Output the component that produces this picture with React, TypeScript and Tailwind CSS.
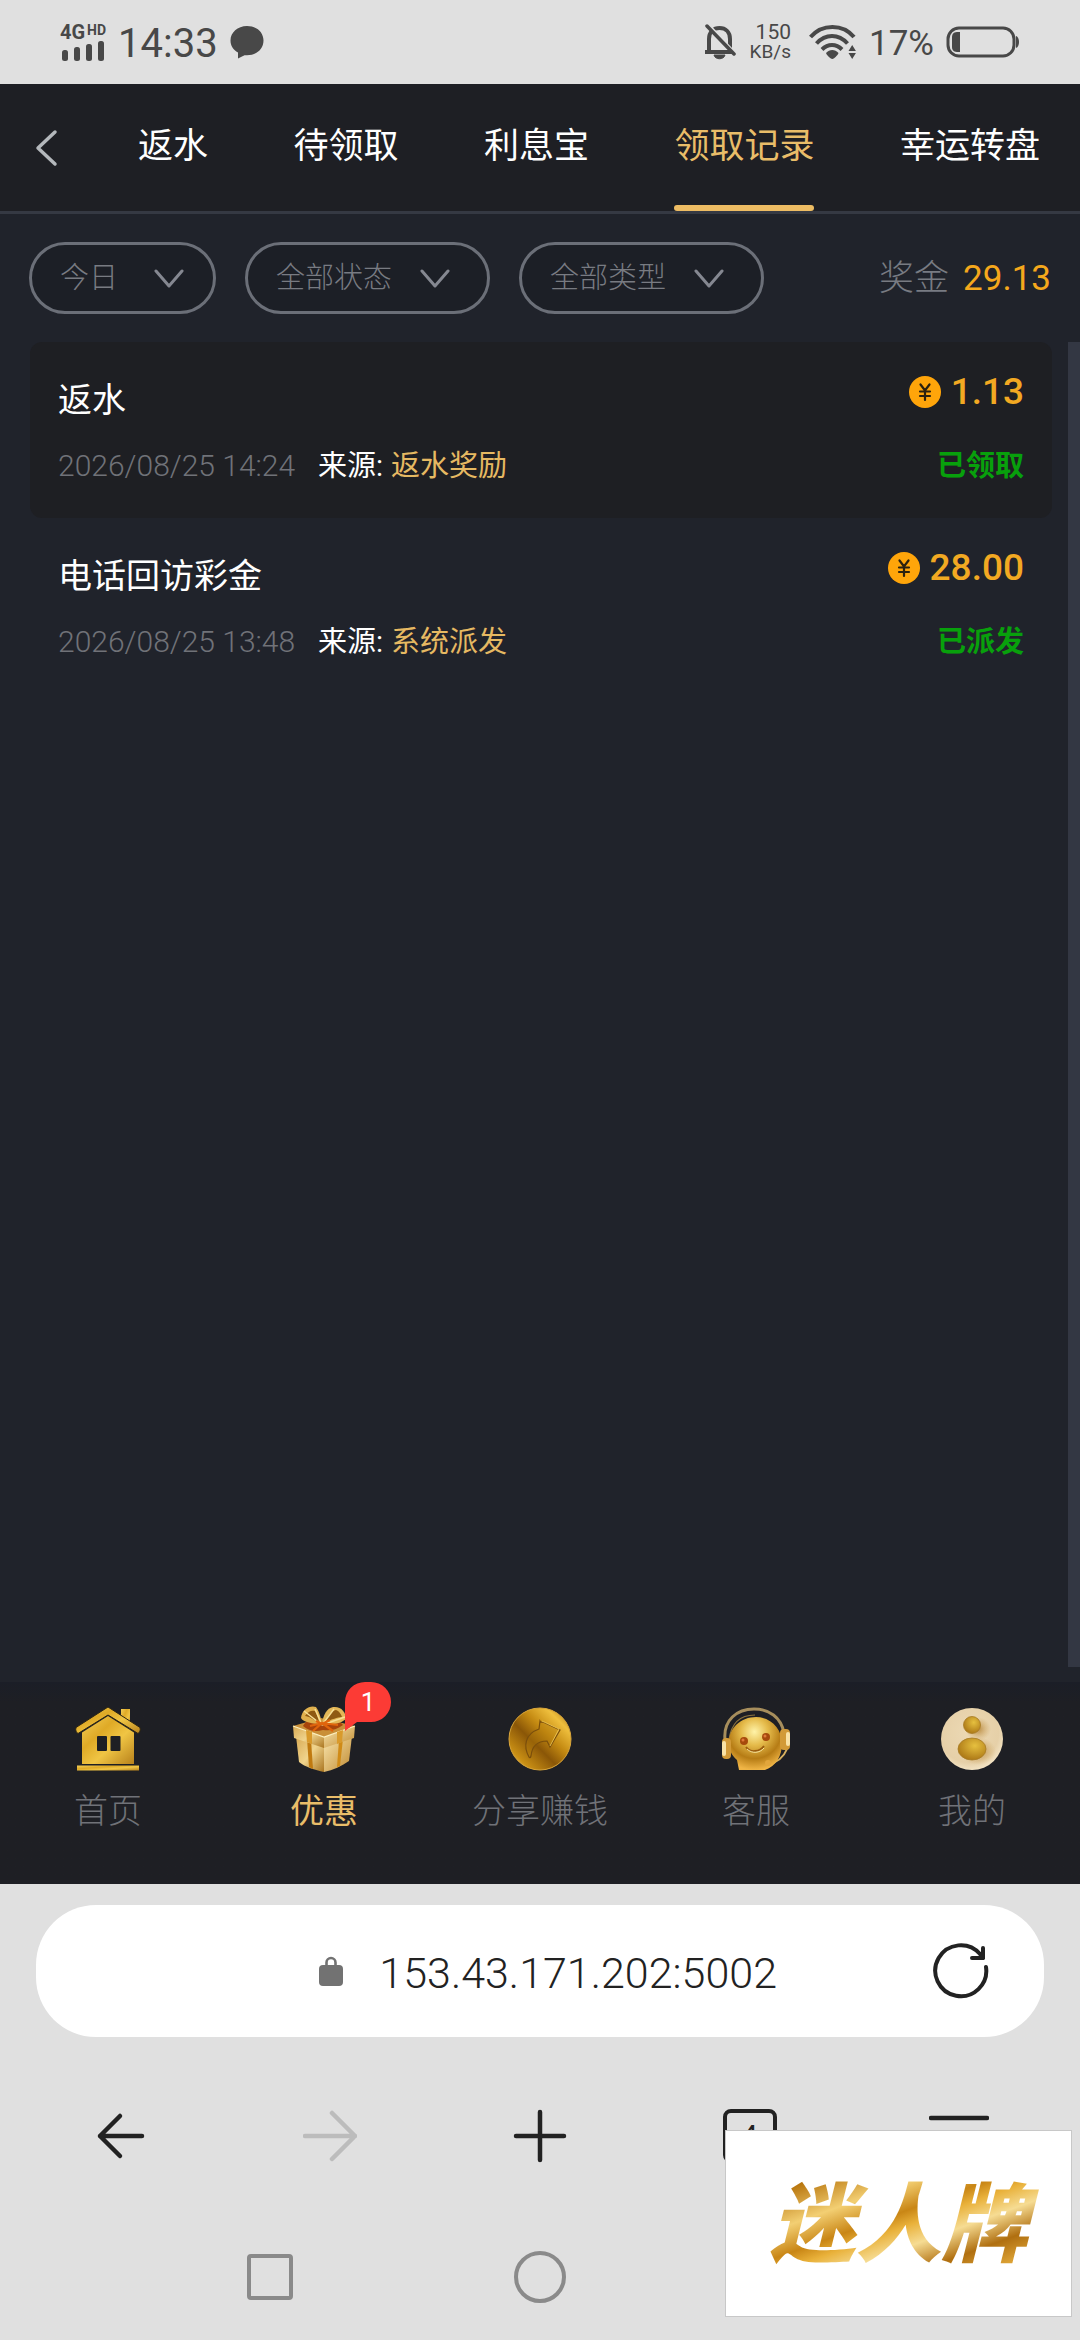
import { useState } from "react";
import clsx from "clsx";

interface RewardLog {
  id: number;
  title: string;
  time: string;
  source: string;
  amount: string;
  status: string;
}

const TABS = ["返水", "待领取", "利息宝", "领取记录", "幸运转盘"];

const FILTERS = [
  { label: "日期", options: ["今日", "昨日", "近7日"], width: "w-[187px]", arrow: "right-8" },
  { label: "状态", options: ["全部状态", "已领取", "已派发"], width: "w-[245px]", arrow: "right-10" },
  { label: "类型", options: ["全部类型", "返水", "彩金"], width: "w-[245px]", arrow: "right-10" },
];

const LOGS: RewardLog[] = [
  { id: 1, title: "返水", time: "2026/08/25 14:24", source: "返水奖励", amount: "1.13", status: "已领取" },
  { id: 2, title: "电话回访彩金", time: "2026/08/25 13:48", source: "系统派发", amount: "28.00", status: "已派发" },
];

function StatusBar() {
  return (
    <div className="flex h-[84px] items-center justify-between bg-[#e0e0e0] px-[60px] text-[#484848]">
      <div className="flex items-center">
        <div className="flex w-12 flex-col gap-px font-bold">
          <div className="flex items-start gap-0.5">
            <span className="text-xl leading-4">4G</span>
            <span className="text-sm leading-3">HD</span>
          </div>
          <svg viewBox="0 0 46 20" className="h-5 w-[46px]" fill="currentColor">
            <rect x="2" y="9" width="6" height="11" rx="2.5" />
            <rect x="14" y="6" width="6" height="14" rx="2.5" />
            <rect x="26" y="3" width="6" height="17" rx="2.5" />
            <rect x="38" y="0" width="6" height="20" rx="2.5" />
          </svg>
        </div>
        <span className="ml-2.5 pt-1 text-[40px] leading-[80px]">14:33</span>
        <svg viewBox="0 0 34 34" className="ml-3 h-[34px] w-[34px]" fill="currentColor">
          <path d="M17 1C7.500 1 .5 7.500.5 15.500c0 5.200 2.800 9.400 7.500 12v6l6.500-3.300c.8.1 1.600.1 2.500.1 9.500 0 16.500-6.300 16.500-14.800S26.500 1 17 1z" />
        </svg>
      </div>

      <div className="flex items-center">
        <svg viewBox="0 0 32 36" className="h-9 w-8" fill="none" stroke="currentColor" strokeWidth="4">
          <path d="M5 28V15C5 8 9.500 4 15.500 4S26 8 26 15v13" />
          <path d="M1 28h29" />
          <path d="M10 31h11c-1 5-10 5-11 0z" fill="currentColor" strokeWidth="1" />
          <path d="M6 2.500l25 27" stroke="#e0e0e0" strokeWidth="3" />
          <path d="M3 2l27 28" strokeLinecap="round" strokeWidth="3.500" />
        </svg>
        <div className="ml-3.5 flex flex-col items-end text-[21px] leading-[19px]">
          <span>150</span>
          <span className="text-[19px] leading-[19px]">KB/s</span>
        </div>
        <svg viewBox="0 0 48 36" className="ml-[18px] h-9 w-12" fill="none" stroke="currentColor" strokeWidth="4">
          <path d="M1.500 13C13-.5 34-.5 45 13" />
          <path d="M7.500 19.500c9-10 22-10 31 0" />
          <path d="M13 25.500c6-6 14-6 20 0" />
          <path d="M17 29c3.500-4 9-4 12.500 0-1 2.500-4 5.500-6.200 6C21 34.500 18 31.500 17 29z" fill="currentColor" stroke="none" />
          <path d="M39.500 27l3.700-6 3.700 6zM39.500 29l3.700 6 3.700-6z" fill="currentColor" stroke="none" />
        </svg>
        <span className="ml-3 pt-1 text-[35px] leading-[80px]">17%</span>
        <svg viewBox="0 0 74 32" className="ml-3 h-8 w-[74px]" fill="none" stroke="currentColor" strokeWidth="3">
          <rect x="2" y="2" width="66" height="28" rx="11" />
          <path d="M14 6v20h-3c-4 0-5-3-5-5V11c0-2 1-5 5-5z" fill="currentColor" stroke="none" />
          <path d="M70 10c4 1 4 11 0 12z" fill="currentColor" stroke="none" />
        </svg>
      </div>
    </div>
  );
}

function GoldDefs() {
  return (
    <svg className="absolute h-0 w-0" aria-hidden="true">
      <defs>
        <linearGradient id="gold" x1="0" y1="0" x2="1" y2="1">
          <stop offset="0" stopColor="#f3cf5a" />
          <stop offset=".35" stopColor="#dfaa26" />
          <stop offset=".6" stopColor="#f0c544" />
          <stop offset="1" stopColor="#b8821c" />
        </linearGradient>
        <linearGradient id="coin" x1="0" y1="1" x2="1" y2="0">
          <stop offset="0" stopColor="#fbe08a" />
          <stop offset=".18" stopColor="#c98f14" />
          <stop offset=".42" stopColor="#8a5607" />
          <stop offset=".6" stopColor="#c48a12" />
          <stop offset=".8" stopColor="#efbf3d" />
          <stop offset="1" stopColor="#9a640b" />
        </linearGradient>
        <linearGradient id="boxLeft" x1="0" y1="0" x2="1" y2="1">
          <stop offset="0" stopColor="#d8a952" />
          <stop offset=".5" stopColor="#f0d48d" />
          <stop offset="1" stopColor="#a9741f" />
        </linearGradient>
        <linearGradient id="boxRight" x1="0" y1="0" x2="1" y2="1">
          <stop offset="0" stopColor="#f9e6ae" />
          <stop offset="1" stopColor="#c08a31" />
        </linearGradient>
        <radialGradient id="ball" cx=".48" cy=".28" r=".72">
          <stop offset="0" stopColor="#fff3a8" />
          <stop offset=".35" stopColor="#e5bb4b" />
          <stop offset=".7" stopColor="#b67c15" />
          <stop offset="1" stopColor="#f0b546" />
        </radialGradient>
        <radialGradient id="bead" cx=".6" cy=".35" r=".7">
          <stop offset="0" stopColor="#e6c03f" />
          <stop offset="1" stopColor="#a97414" />
        </radialGradient>
        <radialGradient id="cream" cx=".45" cy=".4" r=".6">
          <stop offset="0" stopColor="#ecd9b4" />
          <stop offset=".8" stopColor="#e6d0a8" />
          <stop offset="1" stopColor="#f2e2c2" />
        </radialGradient>
        <radialGradient id="shade">
          <stop offset="0" stopColor="#a8721c" stopOpacity=".75" />
          <stop offset="1" stopColor="#c89a4c" stopOpacity="0" />
        </radialGradient>
      </defs>
    </svg>
  );
}

function HomeIcon() {
  return (
    <svg viewBox="0 0 66 66" className="h-[66px] w-[66px]">
      <path d="M46 3h9v20l-9-7z" fill="url(#gold)" />
      <path d="M33 10L7 26.500V58h52V26.500z" fill="url(#gold)" />
      <path d="M33 1L1 21.500c-.8 2.800.2 5 2 6L33 9l30 18.500c1.800-1 2.800-3.200 2-6z" fill="url(#gold)" stroke="#2b2413" strokeWidth="1" />
      <rect x="22" y="30" width="10" height="15" rx="1" fill="#1e1f24" />
      <rect x="35.500" y="30" width="10" height="15" rx="1" fill="#1e1f24" />
      <rect x="2" y="59.500" width="62" height="5" fill="url(#gold)" />
    </svg>
  );
}

function GiftIcon() {
  return (
    <svg viewBox="0 0 66 66" className="h-[66px] w-[66px]">
      <path d="M5 30l28 9v27c-9-2-19-5-25-10z" fill="url(#boxLeft)" />
      <path d="M33 39l28-9-3 25c-7 5-16 9-25 11z" fill="url(#boxRight)" />
      <path d="M16 33l4 1 2 29-4-2z" fill="#c07a10" />
      <path d="M48 34l4-1-3 27-3 1z" fill="#d08b17" />
      <path d="M2 20l28-8 34 8-31 11z" fill="#c98f38" />
      <path d="M2 20l31 11v11L3 32z" fill="url(#boxLeft)" />
      <path d="M33 31l31-11-1 12-30 10z" fill="url(#boxRight)" />
      <path d="M2 20l31 11 31-11" fill="none" stroke="#fff0bd" strokeWidth="1.200" />
      <path d="M15 24l6 2v12l-5-2zM46 26l6-2-1 12-5 2z" fill="#d99a2b" />
      <path d="M12 20c5-8 12-8 19-4 8-5 17-3 21 3-7 5-13 6-20 5-8 2-14 1-20-4z" fill="#a8440b" />
      <path d="M31 18C22 18 12 16 10 12 11 3 19-1 25 1c3 4 5 11 6 17z" fill="#dfb04d" />
      <path d="M31 18c1-9 5-16 11-17 8-1 13 5 13 12-6 5-15 6-24 5z" fill="#e3b757" />
      <path d="M28 16C22 14 18 10 14 10c3-5 7-6 10-5 2 3 3 7 4 11zM35 15c2-6 5-10 10-11 3 1 5 4 6 7-5 0-10 3-16 4z" fill="#8f5a12" />
      <path d="M31 19L13 5M31 19L24 3M31 19l12-16M31 19l23-8" stroke="#f7df95" strokeWidth="1.500" />
      <path d="M19 20l12-3 16 2M22 25l9-8 11 8M25 15l6 3 8-4" fill="none" stroke="#e0640c" strokeWidth="2.200" />
    </svg>
  );
}

function ShareIcon() {
  return (
    <svg viewBox="0 0 66 66" className="h-[66px] w-[66px]">
      <circle cx="33" cy="33" r="31" fill="url(#coin)" stroke="#d9a53a" strokeWidth="1" />
      <path
        d="M22 51c-6-11-4-23 10-28l1-8c1 2 2 1 3 1l17 8-10 17-3-6c-9 0-15 5-16 15-.5 2-1.500 2-2 1z"
        fill="#b37c0c"
        fillOpacity=".35"
        stroke="#7a4e0c"
        strokeWidth="1.200"
      />
      <path d="M35 15l17 8-9 17" fill="none" stroke="#f2cd59" strokeWidth=".8" />
    </svg>
  );
}

function ServiceIcon() {
  return (
    <svg viewBox="0 0 72 66" className="h-[66px] w-[72px]">
      <path d="M5 34C3 14 17 3 34 3c15 0 27 8 30 24" fill="none" stroke="#a78e5c" strokeWidth="3" />
      <path d="M9 34C11 18 20 9 35 9" fill="none" stroke="#8c7340" strokeWidth="1.200" />
      <path d="M67 43c-4 10-11 14-20 16" fill="none" stroke="#d8b160" strokeWidth="2" />
      <path d="M36 11c15 0 26 12 26 26 0 13-6 23-17 27H19l-2-10c-6-5-8-11-8-18 0-14 12-25 27-25z" fill="url(#ball)" />
      <rect x="2" y="32" width="9" height="21" rx="4" fill="#d29a38" />
      <rect x="2" y="35" width="4" height="15" rx="2" fill="#f9e2a6" />
      <rect x="60" y="23" width="10" height="21" rx="4" fill="#d29a38" />
      <rect x="66" y="26" width="4" height="14" rx="2" fill="#f9e2a6" />
      <circle cx="24" cy="35" r="4" fill="#a64a0c" />
      <circle cx="46" cy="31" r="4" fill="#a64a0c" />
      <circle cx="23" cy="34" r="1.500" fill="#e0793a" />
      <circle cx="45" cy="30" r="1.500" fill="#e0793a" />
      <path d="M26 41c4 6 14 5 18-1" fill="none" stroke="#9a5c0e" strokeWidth="1.800" />
      <path d="M27 43c5 5 13 4 17-1" fill="none" stroke="#fff0ae" strokeWidth=".9" />
      <circle cx="48" cy="57" r="3" fill="#e2a63c" />
    </svg>
  );
}

function MineIcon() {
  return (
    <svg viewBox="0 0 66 66" className="h-[66px] w-[66px]">
      <circle cx="33" cy="33" r="31" fill="url(#cream)" />
      <ellipse cx="39" cy="23" rx="13" ry="12" fill="url(#shade)" />
      <ellipse cx="39" cy="45" rx="18" ry="14" fill="url(#shade)" />
      <circle cx="33" cy="19" r="8.500" fill="url(#bead)" stroke="#a77b25" strokeWidth=".8" />
      <ellipse cx="33" cy="43" rx="14" ry="11" fill="url(#bead)" stroke="#a77b25" strokeWidth=".8" />
    </svg>
  );
}

const NAV = [
  { label: "首页", icon: <HomeIcon /> },
  { label: "优惠", icon: <GiftIcon />, badge: 1 },
  { label: "分享赚钱", icon: <ShareIcon /> },
  { label: "客服", icon: <ServiceIcon /> },
  { label: "我的", icon: <MineIcon /> },
];

function Coin() {
  return (
    <svg viewBox="0 0 32 32" className="h-8 w-8">
      <circle cx="16" cy="16" r="16" fill="#ffa50a" />
      <path d="M11.500 8.500L16 14.500l4.500-6M16 14.500V24M11 15.500h10M11 20h10" fill="none" stroke="#2b210f" strokeWidth="2.200" strokeLinecap="round" />
    </svg>
  );
}

function BrowserBar() {
  const tool = "flex flex-1 justify-center";
  return (
    <div className="bg-[#e0e0e0] text-[#222]">
      <div className="px-9 pt-[21px]">
        <div className="flex h-[132px] items-center rounded-[60px] bg-white pr-[55px]">
          <div className="flex-[2]" />
          <svg viewBox="0 0 24 30" className="h-[30px] w-6" fill="#727272">
            <rect x="0" y="9" width="24" height="21" rx="4" />
            <path d="M7.500 10V6.500a4.500 4.500 0 019 0V10" fill="none" stroke="#727272" strokeWidth="2.600" />
          </svg>
          <input
            aria-label="地址"
            defaultValue="153.43.171.202:5002"
            className="ml-9 w-[412px] bg-transparent pt-1 text-[43px] leading-[60px] font-light outline-none"
          />
          <div className="flex-1" />
          <button aria-label="刷新">
            <svg viewBox="0 0 56 56" className="h-14 w-14" fill="none" stroke="currentColor" strokeWidth="4" strokeLinecap="round" strokeLinejoin="round">
              <path d="M53 24A25.500 25.500 0 1147 11l3 4" />
              <path d="M50 5v10H39" />
            </svg>
          </button>
        </div>
      </div>

      <div className="flex h-[177px] items-center px-4 pt-5">
        <button aria-label="后退" className={tool}>
          <svg viewBox="0 0 54 54" className="h-[54px] w-[54px]" fill="none" stroke="currentColor" strokeWidth="4.500" strokeLinecap="round" strokeLinejoin="round">
            <path d="M48 27H6M26 7L6 27l20 20" />
          </svg>
        </button>
        <button aria-label="前进" disabled className={clsx(tool, "text-[#bcbcbc]")}>
          <svg viewBox="0 0 54 54" className="h-[54px] w-[54px]" fill="none" stroke="currentColor" strokeWidth="4.500" strokeLinecap="round" strokeLinejoin="round">
            <path d="M2 27h50M29 4l23 23-23 23" />
          </svg>
        </button>
        <button aria-label="新建标签页" className={tool}>
          <svg viewBox="0 0 54 54" className="h-[54px] w-[54px]" fill="none" stroke="currentColor" strokeWidth="4.500" strokeLinecap="round">
            <path d="M27 3v48M3 27h48" />
          </svg>
        </button>
        <button aria-label="标签页" className={tool}>
          <span className="flex h-[54px] w-[54px] items-center justify-center rounded-lg border-4 border-[#222] text-[28px] leading-none">4</span>
        </button>
        <button aria-label="菜单" className={tool}>
          <svg viewBox="0 0 60 42" className="h-[42px] w-[60px]" stroke="currentColor" strokeWidth="4.500" strokeLinecap="round">
            <path d="M2 3h56M2 21h56M2 39h56" />
          </svg>
        </button>
      </div>

      <div className="flex h-[126px] items-center justify-around px-[135px] text-[#8a8a8a]">
        <button aria-label="最近任务" className={tool}>
          <span className="h-[46px] w-[46px] rounded border-4 border-current" />
        </button>
        <button aria-label="主屏幕" className={tool}>
          <span className="h-[52px] w-[52px] rounded-full border-4 border-current" />
        </button>
        <button aria-label="返回" className={tool}>
          <svg viewBox="0 0 54 54" className="h-[54px] w-[54px]" fill="none" stroke="currentColor" strokeWidth="4" strokeLinejoin="round">
            <path d="M42 6v42L10 27z" />
          </svg>
        </button>
      </div>
    </div>
  );
}

export default function App() {
  const [tab, setTab] = useState("领取记录");

  return (
    <div className="relative flex min-h-screen flex-col bg-[#20232b] font-['Roboto','Noto_Sans_CJK_SC',sans-serif]">
      <GoldDefs />
      <StatusBar />

      <header className="flex h-[130px] items-stretch border-b-[3px] border-[#353943] bg-[#1e1f24] pr-10 pl-8">
        <button aria-label="返回" className="flex items-center text-[#b4b8bc]">
          <svg viewBox="0 0 28 40" className="h-10 w-7" fill="none" stroke="currentColor" strokeWidth="3.500" strokeLinecap="round" strokeLinejoin="round">
            <path d="M23 4L6 20l17 16" />
          </svg>
        </button>
        <div className="flex flex-1 justify-between pl-[78px]">
          {TABS.map((t) => (
            <button key={t} onClick={() => setTab(t)} className={clsx("flex flex-col", t === tab ? "text-[#e9bd69]" : "text-white")}>
              <span className="flex flex-1 items-center pt-1 text-[35px] leading-none">{t}</span>
              <span className={clsx("h-1.5 w-full rounded-full", t === tab && "bg-[#edbc63]")} />
            </button>
          ))}
        </div>
      </header>

      <div className="flex items-center gap-[29px] px-[29px] py-7">
        {FILTERS.map((f) => (
          <div key={f.label} className={clsx("relative", f.width)}>
            <select
              aria-label={f.label}
              className="h-[72px] w-full appearance-none rounded-full border-[3px] border-[#6b6f78] bg-[#1c1f26] pt-0.5 pl-7 text-[29px] font-light text-[#787b82] outline-none"
            >
              {f.options.map((o) => (
                <option key={o}>{o}</option>
              ))}
            </select>
            <svg
              viewBox="0 0 30 20"
              className={clsx("pointer-events-none absolute top-[27px] h-5 w-[30px]", f.arrow)}
              fill="none"
              stroke="#858891"
              strokeWidth="3"
              strokeLinecap="round"
              strokeLinejoin="round"
            >
              <path d="M2 2l13 15L28 2" />
            </svg>
          </div>
        ))}
        <div className="ml-auto flex items-center gap-3.5 text-[35px] leading-none">
          <span className="font-light text-[#787b82]">奖金</span>
          <span className="text-[#f5a81c]">29.13</span>
        </div>
      </div>

      <main className="flex flex-1 pb-[15px]">
        <ul className="flex-1 pl-[30px]">
          {LOGS.map((log, i) => (
            <li key={log.id} className={clsx("flex h-44 justify-between rounded-xl px-7 pt-8", i % 2 === 0 && "bg-[#1e1f23]")}>
              <div className="flex flex-col gap-6 pt-1">
                <h2 className="text-[34px] leading-[44px] text-white">{log.title}</h2>
                <p className="flex text-[29px] leading-[40px]">
                  <time className="w-[260px] text-[30px] font-light text-[#707278]">{log.time}</time>
                  <span className="text-white">来源:</span>
                  <span className="ml-2 text-[#e6b962]">{log.source}</span>
                </p>
              </div>
              <div className="flex flex-col items-end gap-9">
                <div className="flex items-center gap-2.5 text-[37px] leading-9 font-medium text-[#f2a922]">
                  <Coin />
                  {log.amount}
                </div>
                <span className="text-[29px] leading-[40px] font-bold text-[#08a00c]">{log.status}</span>
              </div>
            </li>
          ))}
        </ul>
        <div className="ml-4 w-3 bg-[#333743]" />
      </main>

      <nav className="flex h-[202px] bg-linear-to-b from-[#1b1e27] to-[#1e1f24] to-10% pt-6">
        {NAV.map((n) => (
          <a key={n.label} href="#" className={clsx("flex flex-1 flex-col items-center gap-4", n.badge ? "text-[#e9bd69]" : "text-[#707278]")}>
            <span className="relative">
              {n.icon}
              {n.badge && (
                <span className="absolute -top-6 left-[54px] flex h-10 w-[46px] items-center justify-center text-[26px] text-white">
                  <svg viewBox="0 0 46 50" className="absolute top-0 left-0 h-[50px] w-[46px]">
                    <path d="M20 0h6a20 20 0 010 40H12L0 49V20A20 20 0 0120 0z" fill="#fc3b35" />
                  </svg>
                  <span className="relative">{n.badge}</span>
                </span>
              )}
            </span>
            <span className={clsx("text-[34px] leading-[46px]", !n.badge && "font-light")}>{n.label}</span>
          </a>
        ))}
      </nav>

      <BrowserBar />

      {/* floating brand mark, sits over the browser chrome */}
      <div className="absolute right-2 bottom-[23px] flex h-[187px] w-[347px] items-center justify-center border border-[#c8c8c8] bg-white">
        <span className="bg-[linear-gradient(160deg,#b9770f_15%,#f3cf73_32%,#c98615_45%,#e9b13a_52%,#f6dc93_62%,#b06f10_75%,#e2a93a_88%)] bg-clip-text px-3 pt-1 text-[86px] leading-[110px] font-black text-transparent italic">
          迷人牌
        </span>
      </div>
    </div>
  );
}
